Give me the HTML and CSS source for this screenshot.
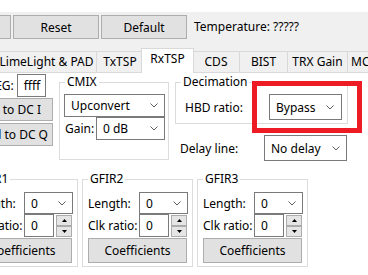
FILE: index.html
```html
<!DOCTYPE html>
<html lang="en">
<head>
  <meta charset="UTF-8">
  <meta name="viewport" content="width=device-width, initial-scale=1.0">
  <title>RxTSP</title>
  <link rel="stylesheet" href="styles.css">
</head>
<body>

  <div class="strip"></div>

  <div class="toolbar">
    <button class="btn btn-top">Refresh</button>
    <button class="btn btn-top">Reset</button>
    <button class="btn btn-top">Default</button>
    <span class="temp">Temperature: ?????</span>
  </div>

  <div class="tabs">
    <div class="tab tab-ll">LimeLight &amp; PAD</div>
    <div class="tab tab-tx">TxTSP</div>
    <div class="tab tab-rx active">RxTSP</div>
    <div class="tab tab-cds">CDS</div>
    <div class="tab tab-bist">BIST</div>
    <div class="tab tab-gain">TRX Gain</div>
    <div class="tab tab-mcu">MCU</div>
  </div>

  <div class="panel">
    <div class="panel-top">
      <div class="dc">
        <div class="dc-reg">
          <span>DC_REG:</span>
          <div class="field field-reg">ffff</div>
        </div>
        <button class="btn btn-dc btn-dci">Load to DC I</button>
        <button class="btn btn-dc btn-dcq">Load to DC Q</button>
      </div>

      <fieldset class="group cmix">
        <legend>CMIX</legend>
        <div class="cmix-body">
          <div class="combo combo-mode">
            <span>Upconvert</span>
            <svg class="arrow" width="8" height="5" viewBox="0 0 8 5"><path d="M0.5 0.5 L4 4 L7.5 0.5" fill="none" stroke="#5f5f5f"/></svg>
          </div>
          <div class="line">
            <span class="gain-label">Gain:</span>
            <div class="combo combo-gain">
              <span>0 dB</span>
              <svg class="arrow" width="8" height="5" viewBox="0 0 8 5"><path d="M0.5 0.5 L4 4 L7.5 0.5" fill="none" stroke="#5f5f5f"/></svg>
            </div>
          </div>
        </div>
      </fieldset>

      <div class="right">
        <fieldset class="group decim">
          <legend>Decimation</legend>
          <div class="line decim-body">
            <span>HBD ratio:</span>
            <div class="combo combo-hbd">
              <span>Bypass</span>
              <svg class="arrow" width="8" height="5" viewBox="0 0 8 5"><path d="M0.5 0.5 L4 4 L7.5 0.5" fill="none" stroke="#5f5f5f"/></svg>
            </div>
          </div>
        </fieldset>
        <div class="line delay">
          <span>Delay line:</span>
          <div class="combo combo-delay">
            <span>No delay</span>
            <svg class="arrow" width="8" height="5" viewBox="0 0 8 5"><path d="M0.5 0.5 L4 4 L7.5 0.5" fill="none" stroke="#5f5f5f"/></svg>
          </div>
        </div>
      </div>
    </div>

    <div class="panel-bottom">
      <fieldset class="group gfir">
        <legend>GFIR1</legend>
        <div class="gfir-body">
          <div class="line">
            <span class="gfir-label">Length:</span>
            <div class="combo combo-len">
              <span>0</span>
              <svg class="arrow" width="8" height="5" viewBox="0 0 8 5"><path d="M0.5 0.5 L4 4 L7.5 0.5" fill="none" stroke="#5f5f5f"/></svg>
            </div>
          </div>
          <div class="line">
            <span class="gfir-label">Clk ratio:</span>
            <div class="field field-spin">0</div>
            <div class="spin">
              <div class="spin-btn"><svg width="5" height="3" viewBox="0 0 5 3"><path d="M2.5 0 L5 3 L0 3 Z"/></svg></div>
              <div class="spin-btn"><svg width="5" height="3" viewBox="0 0 5 3"><path d="M0 0 L5 0 L2.5 3 Z"/></svg></div>
            </div>
          </div>
          <button class="btn btn-coef">Coefficients</button>
        </div>
      </fieldset>

      <fieldset class="group gfir">
        <legend>GFIR2</legend>
        <div class="gfir-body">
          <div class="line">
            <span class="gfir-label">Length:</span>
            <div class="combo combo-len">
              <span>0</span>
              <svg class="arrow" width="8" height="5" viewBox="0 0 8 5"><path d="M0.5 0.5 L4 4 L7.5 0.5" fill="none" stroke="#5f5f5f"/></svg>
            </div>
          </div>
          <div class="line">
            <span class="gfir-label">Clk ratio:</span>
            <div class="field field-spin">0</div>
            <div class="spin">
              <div class="spin-btn"><svg width="5" height="3" viewBox="0 0 5 3"><path d="M2.5 0 L5 3 L0 3 Z"/></svg></div>
              <div class="spin-btn"><svg width="5" height="3" viewBox="0 0 5 3"><path d="M0 0 L5 0 L2.5 3 Z"/></svg></div>
            </div>
          </div>
          <button class="btn btn-coef">Coefficients</button>
        </div>
      </fieldset>

      <fieldset class="group gfir">
        <legend>GFIR3</legend>
        <div class="gfir-body">
          <div class="line">
            <span class="gfir-label">Length:</span>
            <div class="combo combo-len">
              <span>0</span>
              <svg class="arrow" width="8" height="5" viewBox="0 0 8 5"><path d="M0.5 0.5 L4 4 L7.5 0.5" fill="none" stroke="#5f5f5f"/></svg>
            </div>
          </div>
          <div class="line">
            <span class="gfir-label">Clk ratio:</span>
            <div class="field field-spin">0</div>
            <div class="spin">
              <div class="spin-btn"><svg width="5" height="3" viewBox="0 0 5 3"><path d="M2.5 0 L5 3 L0 3 Z"/></svg></div>
              <div class="spin-btn"><svg width="5" height="3" viewBox="0 0 5 3"><path d="M0 0 L5 0 L2.5 3 Z"/></svg></div>
            </div>
          </div>
          <button class="btn btn-coef">Coefficients</button>
        </div>
      </fieldset>
    </div>
  </div>

  <!-- red marker drawn over the HBD ratio box -->
  <div class="highlight"></div>

</body>
</html>
```

FILE: styles.css
```css
* {
  box-sizing: border-box;
}

body {
  margin: 0;
  width: 368px;
  height: 275px;
  overflow: hidden;
  position: relative;
  font-family: "Noto Sans", sans-serif;
  font-size: 12px;
  color: #000;
  background-color: #fff;
}

.strip {
  height: 12px;
}

/* Top buttons */
.toolbar {
  display: flex;
  align-items: flex-start;
  gap: 2px;
  height: 36px;
  padding-top: 3px;
  margin-left: -75px;
  background-color: #f0f0f0;
  white-space: nowrap;
}

.btn {
  font-family: inherit;
  font-size: 12px;
  color: #000;
  background-color: #e1e1e1;
  border: 1px solid #adadad;
  padding: 0;
  margin: 0;
  flex-shrink: 0;
}

.btn-top {
  width: 86px;
  height: 24px;
}

.temp {
  margin-left: 5px;
  line-height: 24px;
}

/* Tabs */
.tabs {
  display: flex;
  align-items: flex-end;
  height: 25px;
  margin-left: -4px;
  background-color: #f0f0f0;
  white-space: nowrap;
}

.tab {
  flex-shrink: 0;
  height: 22px;
  margin-right: -1px;
  border: 1px solid #d9d9d9;
  background-color: #f0f0f0;
  text-align: center;
  line-height: 19px;
}

.tab.active {
  position: relative;
  height: 25px;
  margin: 0 -2px 0 -2px;
  border-bottom: none;
  background-color: #fff;
  line-height: 20px;
}

.tab-ll { width: 101px; }
.tab-tx { width: 48px; }
.tab-rx { width: 53px; }
.tab-cds { width: 48px; }
.tab-bist { width: 49px; }
.tab-gain { width: 61px; }
.tab-mcu {
  width: 36px;
  text-align: left;
  padding-left: 3px;
}

/* Panel */
.panel {
  background-color: #fff;
}

.panel-top {
  display: flex;
  align-items: flex-start;
  height: 88px;
}

.line {
  display: flex;
  align-items: center;
  justify-content: space-between;
  white-space: nowrap;
}

.dc {
  display: flex;
  flex-direction: column;
  flex-shrink: 0;
  width: 87px;
  margin-left: -34px;
  margin-top: 1px;
}

.dc-reg {
  display: flex;
  align-items: center;
  justify-content: flex-end;
  gap: 3px;
  padding-right: 7px;
  white-space: nowrap;
}

.field {
  background-color: #fff;
  border: 1px solid #7a7a7a;
  padding-left: 6px;
  line-height: 21px;
}

.field-reg {
  width: 40px;
  height: 23px;
}

.btn-dc {
  height: 23px;
  width: 87px;
  text-align: right;
  white-space: nowrap;
}

.btn-dci {
  margin-top: 1px;
  padding-right: 11px;
}

.btn-dcq {
  margin-top: 2px;
  padding-right: 4px;
}

/* Group boxes */
.group {
  flex-shrink: 0;
  margin: 0;
  padding: 0;
  min-width: 0;
  border: 1px solid #dcdcdc;
}

.group legend {
  margin-left: 5px;
  padding: 0 2px;
  line-height: 16px;
}

.cmix {
  width: 110px;
  height: 86px;
  margin-left: 6px;
  margin-top: 1px;
}

.cmix-body {
  padding: 4px 3px 0 4px;
}

.gain-label {
  margin-left: 1px;
}

.combo {
  display: flex;
  align-items: center;
  justify-content: space-between;
  background-color: #fff;
  border: 1px solid #7a7a7a;
  padding: 0 6px 0 6px;
  white-space: nowrap;
}

.arrow {
  flex-shrink: 0;
}

.combo-mode {
  width: 101px;
  height: 23px;
}

.combo-gain {
  width: 69px;
  height: 23px;
}

.right {
  flex-shrink: 0;
  width: 173px;
  margin-left: 6px;
  margin-top: 1px;
}

.decim {
  width: 173px;
  height: 50px;
}

.decim-body {
  padding: 4px 5px 0 9px;
}

.combo-hbd {
  width: 73px;
  height: 26px;
  padding-right: 7px;
}

.delay {
  margin-top: 11px;
  padding: 0 1px 0 5px;
}

.combo-delay {
  width: 83px;
  height: 26px;
}

/* GFIR boxes */
.panel-bottom {
  display: flex;
  gap: 4px;
  margin-left: -33px;
  margin-top: 10px;
}

.gfir {
  width: 111px;
  height: 96px;
}

.gfir-body {
  display: flex;
  flex-direction: column;
  padding: 5px 4px 0 5px;
}

.gfir-body .line {
  justify-content: flex-start;
}

.gfir-label {
  width: 51px;
  flex-shrink: 0;
}

.combo-len {
  width: 49px;
  height: 22px;
}

.field-spin {
  width: 30px;
  height: 23px;
  flex-shrink: 0;
}

.spin {
  display: flex;
  flex-direction: column;
  align-self: flex-start;
  margin: 1px 0 0 2px;
}

.spin-btn {
  display: flex;
  align-items: center;
  justify-content: center;
  width: 16px;
  height: 11px;
  background-color: #e5e5e5;
  border: 1px solid #acacac;
}

.btn-coef {
  width: 99px;
  height: 25px;
  margin-top: 1px;
}

/* Red marker over the HBD ratio combo */
.highlight {
  position: absolute;
  left: 252px;
  top: 81px;
  width: 110px;
  height: 52px;
  border: 5px solid #ed1c24;
}
```
